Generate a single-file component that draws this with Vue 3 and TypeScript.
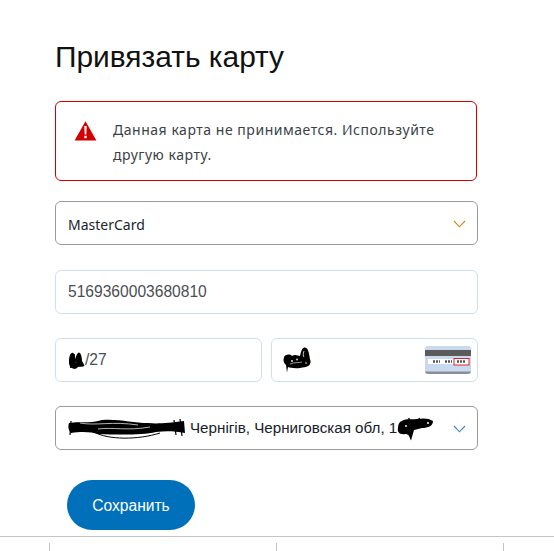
<script setup lang="ts">
const footerTicks: number[] = [1, 2, 3]
</script>

<template>
  <div class="page">
    <main class="form">
      <h1 class="title">Привязать карту</h1>

      <div class="alert">
        <svg class="alert-icon" width="23" height="20" viewBox="0 0 23 20" aria-hidden="true">
          <path d="M11.5 0.3 L22.4 19.5 L0.6 19.5 Z" fill="#d20000" />
          <path d="M10.3 5 h2.4 l-0.4 8.5 h-1.6 Z" fill="#fff" />
          <rect x="10.3" y="14.8" width="2.4" height="2.4" fill="#fff" />
        </svg>
        <p class="alert-text">Данная карта не принимается. Используйте другую карту.</p>
      </div>

      <div class="field select first">
        <span class="select-value">MasterCard</span>
        <svg class="chevron" width="13" height="8" viewBox="0 0 13 8" aria-hidden="true">
          <path d="M1 1 L6.5 6.8 L12 1" fill="none" stroke="#c98a1e" stroke-width="1.1" />
        </svg>
      </div>

      <div class="field input card">5169360003680810</div>

      <div class="pair">
        <div class="field input half">
          <svg class="scrib-date" width="17" height="19" viewBox="0 0 17 19" aria-hidden="true">
            <path d="M1 11 C1 6 2 2 4 2 C6 1 7 5 7.5 8 C8 5 9 2 11 1.5 C13 2 14 7 14 10 C15 12 16 13 16.5 15 C14 16 12 15.5 10 16 C8 18 7 18.5 5 17.5 C3 17 1 15 1 11 Z" fill="#000" />
            <path d="M3 4 C2 9 3 12 3 17 M6 3 L7 17 M11 2 C10 8 12 12 15 15" stroke="#000" stroke-width="1.6" fill="none" />
            <circle cx="8" cy="11" r="0.6" fill="#777" />
          </svg>
          <span>/27</span>
        </div>
        <div class="field input half cvv">
          <svg class="scrib-cvv" width="28" height="26" viewBox="0 0 28 26" aria-hidden="true">
            <path d="M1 10 C3 7 7 7 9 9 C12 7 15 9 17 9 C18 5 19 0 22 0.5 C26 1 26 8 27.5 14 C28 19 24 20 17 21 C12 21.5 7 21 5 20 L4 25.5 L3 18 C0.5 16 0 13 1 10 Z" fill="#000" />
            <circle cx="9" cy="14" r="0.9" fill="#fff" />
            <circle cx="14" cy="12.5" r="0.9" fill="#ddd" />
            <path d="M7 17 C12 15 16 16 19 15" stroke="#fff" stroke-width="0.6" fill="none" />
            <circle cx="23" cy="16" r="1" fill="#a97a3c" />
            <path d="M21 4 C20 7 20 9 21 10" stroke="#fff" stroke-width="0.8" fill="none" />
          </svg>
          <svg class="card-back" width="46" height="28" viewBox="0 0 46 28" aria-hidden="true">
            <rect x="0" y="0" width="46" height="28" rx="3" fill="#c9daf0" />
            <path d="M0 25.5 h46 a3 3 0 0 1 -3 2.5 h-40 a3 3 0 0 1 -3 -2.5 Z" fill="#8a8f97" />
            <rect x="0" y="4" width="46" height="6" fill="#5b5b5b" />
            <rect x="3" y="13" width="26" height="5" fill="#fff" />
            <rect x="29" y="12.5" width="15" height="6.5" fill="#fff" stroke="#e0262c" stroke-width="1" />
            <path d="M8 15.5 h7 M20 15.5 h7 M32 15.5 h8" stroke="#555" stroke-width="2.4" stroke-dasharray="2 1" />
          </svg>
        </div>
      </div>

      <div class="field select address">
        <svg class="scrib-name" width="118" height="22" viewBox="0 0 118 22" aria-hidden="true">
          <path d="M1 5 C10 3 20 6 34 2 C50 0.5 65 5 80 5 C90 6 100 5 116 3 L117 15 C106 13 98 13 88 14 C75 17 52 17 30 16 C24 14 14 13 3 15 C0 12 0 8 1 5 Z" fill="#000" />
          <path d="M12 5 C28 8 44 3 70 7 M30 11 C46 9 60 13 82 9" stroke="#fff" stroke-width="0.7" fill="none" />
          <path d="M26 14 C40 22 70 22 92 15" stroke="#000" stroke-width="1" fill="none" />
          <path d="M106 2 L108 17 M112 1 L114 18 M3 3 L2 17" stroke="#000" stroke-width="1.2" fill="none" />
        </svg>
        <span class="address-text">Чернігів, Черниговская обл, 1</span>
        <svg class="scrib-zip" width="37" height="24" viewBox="0 0 37 24" aria-hidden="true">
          <path d="M3 5 C8 1 14 3 20 2 C26 1 32 1 36 4 C36 9 31 11 25 11 C22 12 20 12 17 13 L14 23.5 C12 19 12 17 8 17 C3 18 0 15 1 11 C1 8 2 6 3 5 Z" fill="#000" />
          <circle cx="31" cy="6" r="1" fill="#fff" />
          <circle cx="9" cy="9" r="0.9" fill="#fff" />
          <path d="M12 1 L11 12 M22 1 L24 11" stroke="#000" stroke-width="1.4" />
        </svg>
        <svg class="chevron" width="13" height="8" viewBox="0 0 13 8" aria-hidden="true">
          <path d="M1 1 L6.5 6.8 L12 1" fill="none" stroke="#3f86c4" stroke-width="1.1" />
        </svg>
      </div>

      <button class="save" type="button">Сохранить</button>
    </main>

    <footer class="footer">
      <span v-for="tick in footerTicks" :key="tick" class="tick"></span>
    </footer>
  </div>
</template>

<style>
html,
body {
  margin: 0;
  background: #fff;
  overflow: hidden;
}
</style>

<style scoped>
.page {
  width: 554px;
  height: 551px;
  display: flex;
  flex-direction: column;
  background: #fff;
  overflow: hidden;
}
.form {
  width: 423px;
  height: 536px;
  box-sizing: border-box;
  margin-left: 55px;
  padding-top: 40px;
  display: flex;
  flex-direction: column;
  align-items: stretch;
}
.title {
  margin: 0 0 28px;
  height: 33px;
  font: 400 29.9px/33px "Liberation Sans", Arial, sans-serif;
  color: #111;
}
.alert {
  width: 422px;
  height: 80px;
  box-sizing: border-box;
  border: 1px solid #d20000;
  border-radius: 6px;
  padding: 15px 30px 0 18px;
  display: flex;
  align-items: flex-start;
  gap: 16px;
}
.alert-icon {
  flex: none;
  margin-top: 4px;
}
.alert-text {
  margin: 0;
  font: 400 14px/25px "Noto Sans", "DejaVu Sans", sans-serif;
  letter-spacing: 0.53px;
  color: #3b4246;
}
.field {
  height: 44px;
  box-sizing: border-box;
  border-radius: 6px;
  display: flex;
  align-items: center;
  padding: 0 12px;
  background: #fff;
}
.select {
  border: 1px solid #9b9b9b;
  position: relative;
}
.first {
  margin-top: 20px;
}
.select-value {
  font: 400 14px/20px "Noto Sans", "DejaVu Sans", sans-serif;
  color: #17252c;
  position: relative;
  top: 2px;
}
.chevron {
  position: absolute;
  right: 11px;
  top: 18px;
}
.input {
  border: 1px solid #cfe0ec;
  font: 400 15.6px/20px "Liberation Sans", Arial, sans-serif;
  color: #4a4f52;
}
.card {
  margin-top: 25px;
}
.pair {
  margin-top: 24px;
  display: flex;
  gap: 9px;
}
.half {
  width: 207px;
  flex: none;
}
.cvv {
  justify-content: space-between;
  padding: 0 6px 0 11px;
}
.scrib-date {
  flex: none;
}
.scrib-cvv {
  flex: none;
}
.card-back {
  flex: none;
}
.address {
  margin-top: 24px;
  font: 400 15.2px/20px "Liberation Sans", Arial, sans-serif;
  color: #16222a;
  white-space: nowrap;
}
.scrib-name {
  flex: none;
  position: relative;
  top: 1px;
}
.address-text {
  margin-left: 4px;
}
.scrib-zip {
  flex: none;
  position: relative;
  top: 1px;
}
.save {
  margin: 30px 0 0 12px;
  width: 128px;
  height: 50px;
  border: 0;
  border-radius: 25px;
  background: #0070ba;
  color: #fff;
  font: 400 15.6px/20px "Liberation Sans", Arial, sans-serif;
  padding: 2px 0 0;
}
.footer {
  border-top: 1px solid #c4c4c4;
  flex: 1;
  padding: 6px 0 0 49px;
  display: flex;
  gap: 226px;
}
.tick {
  width: 1px;
  height: 8px;
  background: #c4c4c4;
}
</style>
